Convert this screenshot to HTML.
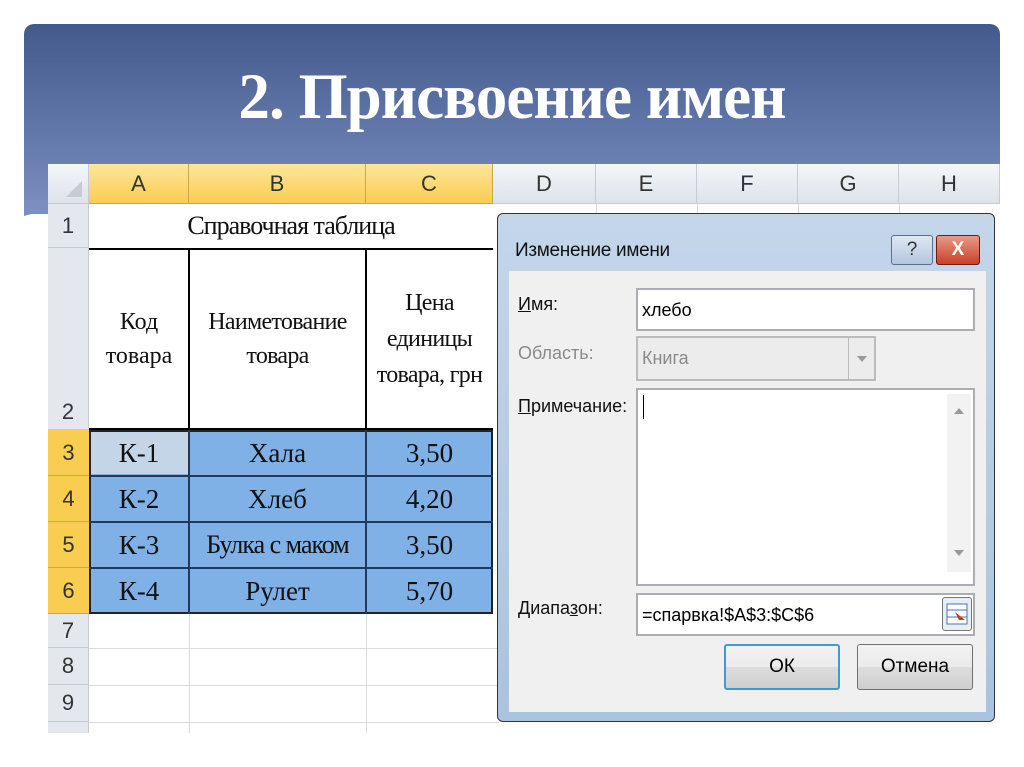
<!DOCTYPE html>
<html><head><meta charset="utf-8"><style>
*{margin:0;padding:0;box-sizing:border-box}
body{width:1024px;height:767px;background:#fff;position:relative;overflow:hidden;font-family:"Liberation Sans",sans-serif}
.panel{position:absolute;left:24px;top:24px;width:976px;height:190px;border-radius:10px 10px 0 0;background:linear-gradient(#44598c,#7a8fc0)}
.tri{position:absolute;left:24px;top:200px;width:24px;height:16px;background:#7a8fc0;clip-path:polygon(0 0,100% 0,100% 60%,0 100%)}
h1{position:absolute;left:0;width:1024px;top:60px;text-align:center;font-family:"Liberation Serif",serif;font-weight:bold;font-size:65px;color:#fff;letter-spacing:-1px;transform:scaleX(0.97)}
.a{position:absolute;display:flex;align-items:center;justify-content:center}
.sheet{position:absolute;left:48px;top:164px;width:952px;height:569px;background:#fff;overflow:hidden}
.hd{background:linear-gradient(#f4f6f9,#dde3ea);color:#333;font-size:22px;border-right:1px solid #c5cbd3;border-bottom:1px solid #c5cbd3}
.hy{background:linear-gradient(#fde69a,#f9cd4f);color:#333;font-size:22px;border-right:1px solid #c9a84a;border-bottom:1px solid #c9a84a}
.rh{background:#e4e8ee;color:#333;font-size:22px;border-bottom:1px solid #c5cbd3;border-right:1px solid #c5cbd3}
.ry{background:#f9cd4f;color:#333;font-size:22px;border-bottom:1px solid #c9a84a}
.s{font-family:"Liberation Serif",serif;color:#111}
.gl{position:absolute;background:#dadcdf}
.dlg{position:absolute;left:497px;top:213px;width:498px;height:509px;border:1px solid #333;border-radius:6px;background:linear-gradient(#c4d6ea,#aac3de)}
.inner{position:absolute;left:11px;top:57px;width:477px;height:441px;background:#f0f0f0}
.lb{position:absolute;font-size:18px;color:#111}
.box{position:absolute;background:#fff;border:2px solid #abadb3}
.btn{position:absolute;border:1px solid #707070;border-radius:3px;background:linear-gradient(#f2f2f2,#ebebeb 50%,#dddddd 50%,#cfcfcf);font-size:19px;display:flex;align-items:center;justify-content:center}
</style></head><body>
<div class="panel"></div><div class="tri"></div>
<h1>2. Присвоение имен</h1>
<div class="sheet">
 <div class="a hd" style="left:0;top:0;width:41px;height:40px"><svg width="20" height="20" style="position:absolute;right:4px;bottom:4px"><polygon points="18,2 18,18 2,18" fill="#c8ccd2"/></svg></div>
 <div class="a hy" style="left:41px;top:0;width:100px;height:40px">A</div>
 <div class="a hy" style="left:141px;top:0;width:177px;height:40px">B</div>
 <div class="a hy" style="left:318px;top:0;width:127px;height:40px">C</div>
 <div class="a hd" style="left:445px;top:0;width:103px;height:40px">D</div>
 <div class="a hd" style="left:548px;top:0;width:101px;height:40px">E</div>
 <div class="a hd" style="left:649px;top:0;width:101px;height:40px">F</div>
 <div class="a hd" style="left:750px;top:0;width:101px;height:40px">G</div>
 <div class="a hd" style="left:851px;top:0;width:101px;height:40px">H</div>
 <div class="a rh" style="left:0;top:40px;width:41px;height:44px">1</div>
 <div class="a rh" style="left:0;top:84px;width:41px;height:182px;align-items:flex-end;padding-bottom:4px">2</div>
 <div class="a ry" style="left:0;top:266px;width:41px;height:46px">3</div>
 <div class="a ry" style="left:0;top:312px;width:41px;height:46px">4</div>
 <div class="a ry" style="left:0;top:358px;width:41px;height:46px">5</div>
 <div class="a ry" style="left:0;top:404px;width:41px;height:46px">6</div>
 <div class="a rh" style="left:0;top:450px;width:41px;height:34px">7</div>
 <div class="a rh" style="left:0;top:484px;width:41px;height:37px">8</div>
 <div class="a rh" style="left:0;top:521px;width:41px;height:37px">9</div>
 <div class="a rh" style="left:0;top:558px;width:41px;height:12px"></div>
 <div class="gl" style="left:141px;top:450px;width:1px;height:120px"></div>
 <div class="gl" style="left:318px;top:450px;width:1px;height:120px"></div>
 <div class="gl" style="left:41px;top:484px;width:410px;height:1px"></div>
 <div class="gl" style="left:41px;top:521px;width:410px;height:1px"></div>
 <div class="gl" style="left:41px;top:558px;width:410px;height:1px"></div>
 <div class="gl" style="left:548px;top:40px;width:1px;height:20px"></div>
 <div class="gl" style="left:649px;top:40px;width:1px;height:20px"></div>
 <div class="gl" style="left:750px;top:40px;width:1px;height:20px"></div>
 <div class="gl" style="left:851px;top:40px;width:1px;height:20px"></div>
 <div class="a s" style="left:41px;top:40px;width:404px;height:44px;font-size:26px;letter-spacing:-1px">Справочная таблица</div>
 <div style="position:absolute;left:41px;top:84px;width:404px;height:182px;border-top:2px solid #000;border-bottom:2px solid #000"></div>
 <div style="position:absolute;left:140px;top:84px;width:2px;height:182px;background:#000"></div>
 <div style="position:absolute;left:317px;top:84px;width:2px;height:182px;background:#000"></div>
 <div class="a s" style="left:41px;top:84px;width:100px;height:182px;font-size:24px;text-align:center;line-height:34px">Код<br>товара</div>
 <div class="a s" style="left:141px;top:84px;width:177px;height:182px;font-size:24px;text-align:center;line-height:34px;letter-spacing:-0.7px">Наиметование<br>товара</div>
 <div class="a s" style="left:318px;top:84px;width:127px;height:182px;font-size:24px;text-align:center;line-height:36px;letter-spacing:-0.7px">Цена<br>единицы<br>товара, грн</div>
 <div style="position:absolute;left:41px;top:266px;width:404px;height:184px;background:#7fb0e6;border:2px solid #222"></div>
 <div style="position:absolute;left:43px;top:268px;width:97px;height:42px;background:#c5d5e8"></div>
 <div style="position:absolute;left:140px;top:266px;width:2px;height:184px;background:#1f3a5c"></div>
 <div style="position:absolute;left:317px;top:266px;width:2px;height:184px;background:#1f3a5c"></div>
 <div style="position:absolute;left:41px;top:311px;width:404px;height:2px;background:#1f3a5c"></div>
 <div style="position:absolute;left:41px;top:357px;width:404px;height:2px;background:#1f3a5c"></div>
 <div style="position:absolute;left:41px;top:403px;width:404px;height:2px;background:#1f3a5c"></div>
 <div class="a s" style="left:41px;top:266px;width:100px;height:46px;font-size:27px">К-1</div>
 <div class="a s" style="left:141px;top:266px;width:177px;height:46px;font-size:27px">Хала</div>
 <div class="a s" style="left:318px;top:266px;width:127px;height:46px;font-size:27px">3,50</div>
 <div class="a s" style="left:41px;top:312px;width:100px;height:46px;font-size:27px">К-2</div>
 <div class="a s" style="left:141px;top:312px;width:177px;height:46px;font-size:27px">Хлеб</div>
 <div class="a s" style="left:318px;top:312px;width:127px;height:46px;font-size:27px">4,20</div>
 <div class="a s" style="left:41px;top:358px;width:100px;height:46px;font-size:27px">К-3</div>
 <div class="a s" style="left:141px;top:358px;width:177px;height:46px;font-size:26px;letter-spacing:-1px">Булка с маком</div>
 <div class="a s" style="left:318px;top:358px;width:127px;height:46px;font-size:27px">3,50</div>
 <div class="a s" style="left:41px;top:404px;width:100px;height:46px;font-size:27px">К-4</div>
 <div class="a s" style="left:141px;top:404px;width:177px;height:46px;font-size:27px">Рулет</div>
 <div class="a s" style="left:318px;top:404px;width:127px;height:46px;font-size:27px">5,70</div>
</div>
<div class="dlg">
 <div style="position:absolute;left:17px;top:26px;font-size:19px;color:#111;letter-spacing:-0.3px">Изменение имени</div>
 <div class="a" style="left:393px;top:21px;width:42px;height:30px;border:1px solid #5a6f8c;border-radius:3px;background:linear-gradient(#dfe8f3,#b3c6dd);font-size:19px;color:#333">?</div>
 <div class="a" style="left:438px;top:21px;width:44px;height:30px;border:1px solid #6b1a12;border-radius:3px;background:linear-gradient(#e89a86,#c8402a);font-size:19px;color:#fff;font-weight:bold">X</div>
 <div class="inner">
  <div class="lb" style="left:9px;top:23px"><u>И</u>мя:</div>
  <div class="box" style="left:127px;top:17px;width:339px;height:43px;padding:10px 4px;font-size:18px">хлебо</div>
  <div class="lb" style="left:9px;top:72px;color:#8a8a8a">Область:</div>
  <div class="box" style="left:127px;top:65px;width:240px;height:45px;background:#ececec;border-color:#bcbcbc;padding:10px 4px;font-size:18px;color:#8a8a8a">Книга</div>
  <div style="position:absolute;left:339px;top:67px;width:26px;height:41px;border-left:1px solid #bcbcbc"><svg width="26" height="41"><polygon points="8,18 18,18 13,24" fill="#9a9a9a"/></svg></div>
  <div class="lb" style="left:9px;top:125px"><u>П</u>римечание:</div>
  <div class="box" style="left:127px;top:117px;width:339px;height:198px"><div style="position:absolute;left:5px;top:5px;width:1px;height:24px;background:#000"></div><div style="position:absolute;right:2px;top:4px;width:24px;height:178px;background:#f2f2f2"><svg width="24" height="178"><polygon points="7,20 17,20 12,14" fill="#999"/><polygon points="7,156 17,156 12,162" fill="#999"/></svg></div></div>
  <div class="lb" style="left:9px;top:327px">Диапа<u>з</u>он:</div>
  <div class="box" style="left:127px;top:322px;width:339px;height:43px;padding:10px 4px;font-size:18px">=спарвка!$A$3:$C$6</div>
  <div style="position:absolute;left:433px;top:326px;width:30px;height:34px;border:1px solid #777;border-radius:3px;background:#e8eef6"><svg width="28" height="32"><rect x="4" y="6" width="20" height="20" fill="#fff" stroke="#4a72b8"/><line x1="4" y1="12" x2="24" y2="12" stroke="#4a72b8"/><line x1="4" y1="19" x2="24" y2="19" stroke="#4a72b8"/><polygon points="12,14 22,22 16,22 18,26" fill="#d0341c"/></svg></div>
  <div class="btn" style="left:215px;top:373px;width:116px;height:46px;border:2px solid #3c9ad8">ОК</div>
  <div class="btn" style="left:348px;top:373px;width:116px;height:46px">Отмена</div>
 </div>
</div>
</body></html>
